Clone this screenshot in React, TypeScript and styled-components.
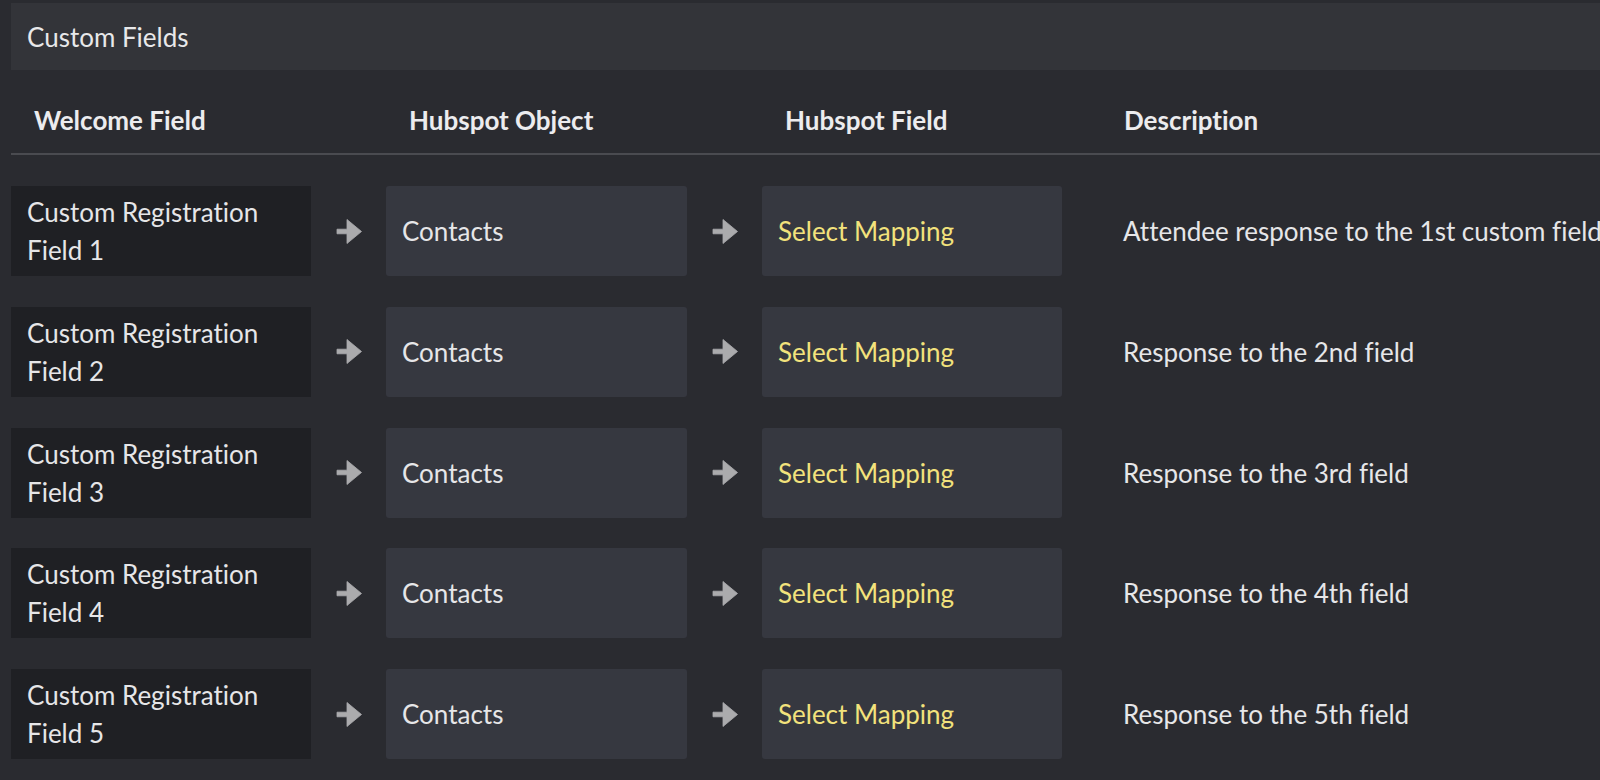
import React from "react";
import styled, { createGlobalStyle } from "styled-components";

const FONT = `Lato, "Open Sans", "Noto Sans", sans-serif`;

const Global = createGlobalStyle`
  html, body {
    margin: 0;
    padding: 0;
    background: #2a2b30;
  }
  body {
    font-family: ${FONT};
    font-variant-ligatures: none;
    font-feature-settings: "liga" 0, "clig" 0;
    color: #e6e6e8;
  }
`;

const Page = styled.div`
  width: 1600px;
  height: 780px;
  overflow: hidden;
  background: #2a2b30;
  padding: 3px 0 0 11px;
  box-sizing: border-box;
`;

const SectionBar = styled.div`
  height: 67px;
  display: flex;
  align-items: center;
  padding-left: 16px;
  background: #333439;
  font-size: 26px;
  color: #e8e8ea;
`;

const Grid = styled.div`
  display: grid;
  grid-template-columns: 300px 75px 301px 75px 300px 1fr;
  align-items: center;
`;

const HeaderRow = styled(Grid)`
  height: 85px;
  box-sizing: border-box;
  padding-top: 17px;
  border-bottom: 2px solid #4a4b50;
`;

const HeadCell = styled.div<{ $col: number; $offset?: number }>`
  grid-column: ${(p) => p.$col};
  grid-row: 1;
  padding-left: ${(p) => p.$offset ?? 23}px;
  font-size: 26px;
  font-weight: 700;
  color: #ececee;
  white-space: nowrap;
`;

const Rows = styled.div`
  display: flex;
  flex-direction: column;
  gap: 30.75px;
  padding-top: 31px;
`;

const Row = styled(Grid)`
  height: 90px;
`;

const Box = styled.div<{ $variant: "dark" | "light" }>`
  height: 90px;
  box-sizing: border-box;
  display: flex;
  align-items: center;
  padding-left: 16px;
  font-size: 26px;
  line-height: 38px;
  background: ${(p) => (p.$variant === "dark" ? "#1f2024" : "#363840")};
  border-radius: ${(p) => (p.$variant === "dark" ? "0" : "3px")};
`;

const Label = styled.span<{ $accent?: boolean }>`
  color: ${(p) => (p.$accent ? "#f2e27c" : "#e6e6e8")};
`;

const ArrowCell = styled.div`
  display: flex;
  justify-content: center;
  align-items: center;
`;

const Description = styled.div`
  padding-left: 61px;
  font-size: 26px;
  color: #e6e6e8;
  white-space: nowrap;
`;

const Arrow = () => (
  <svg width="26" height="25" viewBox="0 0 26 25" aria-hidden>
    <path
      d="M1 10.2 H11 V0.5 L25.5 12.5 L11 24.5 V14.8 H1 Z"
      fill="#ababad"
      stroke="#ababad"
      strokeWidth="0.8"
      strokeLinejoin="round"
    />
  </svg>
);

const rows = [
  { n: 1, desc: "Attendee response to the 1st custom field" },
  { n: 2, desc: "Response to the 2nd field" },
  { n: 3, desc: "Response to the 3rd field" },
  { n: 4, desc: "Response to the 4th field" },
  { n: 5, desc: "Response to the 5th field" },
];

export default function App() {
  return (
    <Page>
      <Global />
      <SectionBar>Custom Fields</SectionBar>
      <HeaderRow>
        <HeadCell $col={1}>Welcome Field</HeadCell>
        <HeadCell $col={3}>Hubspot Object</HeadCell>
        <HeadCell $col={5}>Hubspot Field</HeadCell>
        <HeadCell $col={6} $offset={62}>Description</HeadCell>
      </HeaderRow>
      <Rows>
        {rows.map((r) => (
          <Row key={r.n}>
            <Box $variant="dark">
              <Label>
                Custom Registration
                <br />
                Field {r.n}
              </Label>
            </Box>
            <ArrowCell>
              <Arrow />
            </ArrowCell>
            <Box $variant="light">
              <Label>Contacts</Label>
            </Box>
            <ArrowCell>
              <Arrow />
            </ArrowCell>
            <Box $variant="light">
              <Label $accent>Select Mapping</Label>
            </Box>
            <Description>{r.desc}</Description>
          </Row>
        ))}
      </Rows>
    </Page>
  );
}
